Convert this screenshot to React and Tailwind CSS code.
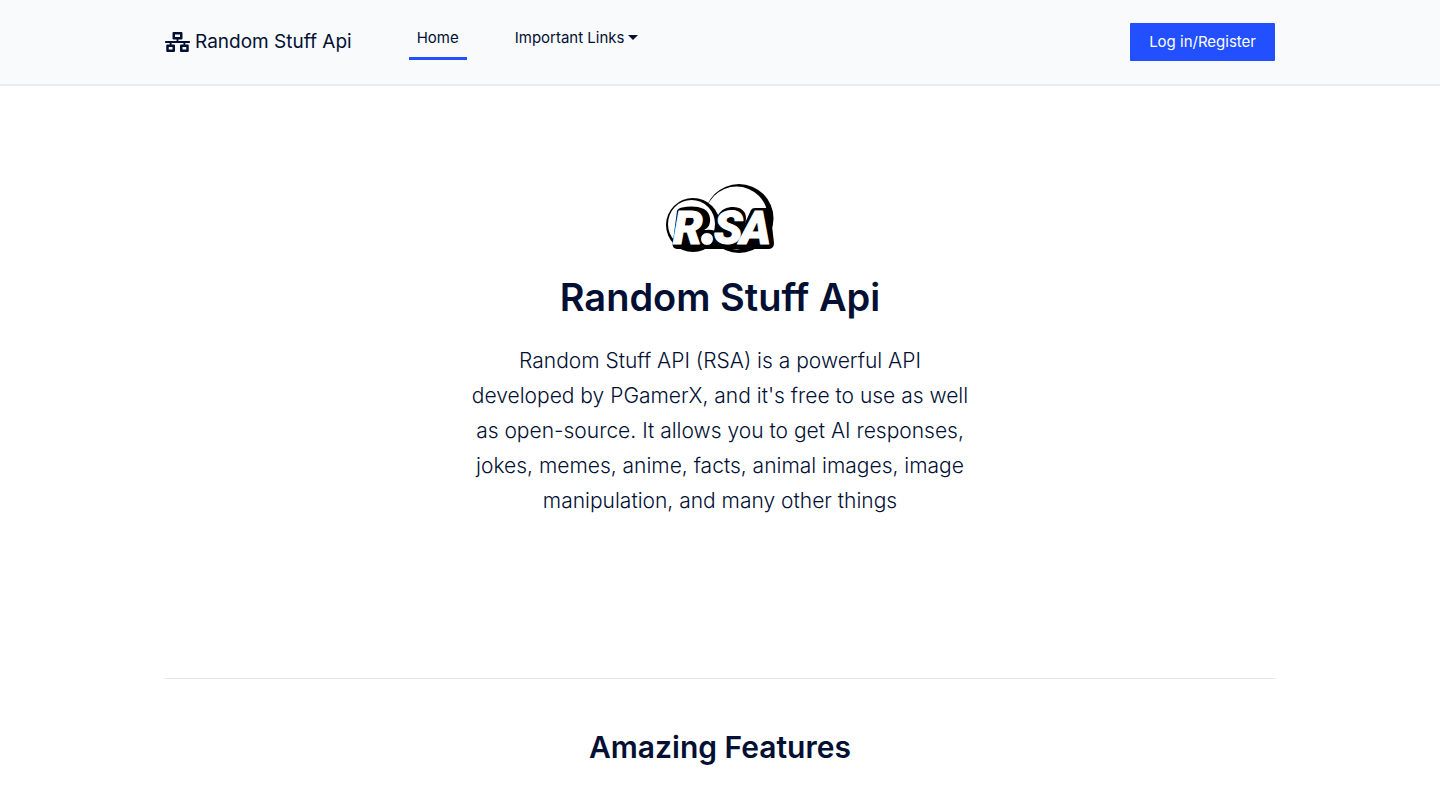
import React from "react";
import { FaNetworkWired } from "react-icons/fa";

function Logo() {
  return (
    <svg viewBox="0 0 110 70" className="h-[70px] w-[110px]" role="img" aria-label="RSA logo">
      <circle cx="74" cy="35.5" r="34.5" fill="#000" />
      <circle cx="71.5" cy="35" r="31.5" fill="#fff" />
      <circle cx="28" cy="42" r="27" fill="#000" />
      <ellipse cx="26.500" cy="41" rx="23.500" ry="24" fill="#fff" />
      <path
        d="M12 28Q13 25 17 24.500Q30 22 39 26Q46 30 45 39Q44 45 39 47L41 47Q48 46 51 49L53 46Q50 40 52 34Q56 25 66 24Q76 23 80 30Q82 36 80 40L86 27Q87 25 90 25H102Q105 26 106 34L109 60Q109 66 103 66H12Q6 65 8 58Z"
        fill="#000"
      />
      <text
        y="61"
        fontFamily="Roboto, sans-serif"
        fontWeight="900"
        fontStyle="italic"
        fontSize="47"
        fill="#fff"
        stroke="#fff"
        strokeWidth="1"
        strokeLinejoin="round"
      >
        <tspan x="8">R</tspan>
        <tspan x="49">S</tspan>
        <tspan x="75">A</tspan>
      </text>
      <circle cx="42" cy="56" r="6.500" fill="#fff" stroke="#000" />
    </svg>
  );
}

export default function App() {
  return (
    <div className="min-h-screen bg-white font-[Inter,sans-serif] text-[#031033]">
      <header className="border-b-2 border-[#e9ecf5] bg-[#f8fafc]">
        <nav className="mx-auto flex h-[84px] max-w-[1140px] items-center px-[15px] text-[15px] leading-6">
          <a href="#home" className="flex items-center gap-[5px] text-[19px]">
            <FaNetworkWired className="h-5 w-[25px]" />
            Random Stuff Api
          </a>
          <ul className="mb-1 ml-[57px] flex items-center gap-10">
            <li>
              <a href="#home" className="block border-b-3 border-[#2350ff] px-2 pt-[5px] pb-[7px]">
                Home
              </a>
            </li>
            <li>
              <button type="button" className="flex items-center gap-1 border-b-3 border-transparent px-2 pt-[5px] pb-[7px]">
                Important Links
                <svg viewBox="0 0 10 5" className="h-[5px] w-2.5" aria-hidden="true">
                  <path d="M0 0h10L5 5z" fill="currentColor" />
                </svg>
              </button>
            </li>
          </ul>
          <a href="#login" className="ml-auto rounded-[1px] bg-[#2350ff] px-[19px] py-[7px] text-white">
            Log in/Register
          </a>
        </nav>
      </header>
      <main className="mx-auto max-w-[1140px] px-[15px]">
        <section className="flex flex-col items-center border-b border-[#e4e5e9] pt-[97px] pb-[160px] text-center">
          <Logo />
          <h1 className="mt-5 text-[38px] leading-12 font-semibold">Random Stuff Api</h1>
          <p className="mt-[22px] max-w-[510px] text-[21px] leading-[35px] font-light">
            Random Stuff API (RSA) is a powerful API developed by PGamerX, and it's free to use as well as
            open-source. It allows you to get AI responses, jokes, memes, anime, facts, animal images, image
            manipulation, and many other things
          </p>
        </section>
        <h2 className="mt-12 pb-6 text-center text-[30px] leading-10 font-semibold">Amazing Features</h2>
      </main>
    </div>
  );
}
